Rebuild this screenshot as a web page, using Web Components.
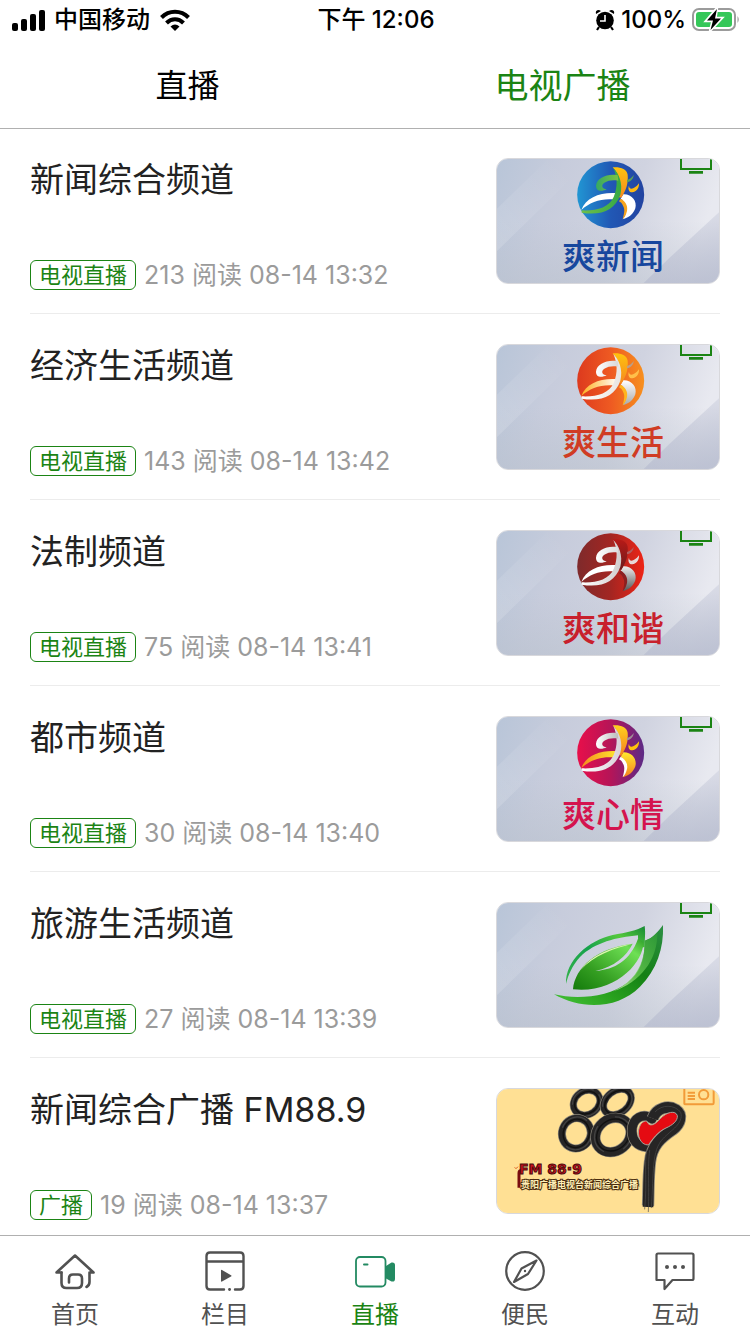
<!DOCTYPE html>
<html lang="zh-CN">
<head>
<meta charset="utf-8">
<meta name="viewport" content="width=device-width, initial-scale=1">
<title>直播</title>
<style>
  html {
    --green: #1b8414;
    --text: #222;
    --muted: #9b9b9b;
    --line: #b0b0b0;
  }
  body {
    margin: 0;
    height: 100vh;
    display: flex;
    flex-direction: column;
    background: #fff;
    color: var(--text);
    font-family: Inter, "Noto Sans CJK SC", sans-serif;
  }
  main {
    flex: 1;
    min-height: 0;
    overflow: hidden;
  }
</style>
</head>
<body>
<status-bar>
  <span slot="carrier">中国移动</span>
  <span slot="time">下午 12:06</span>
  <span slot="battery">100%</span>
</status-bar>
<top-tabs>
  <top-tab>直播</top-tab>
  <top-tab selected>电视广播</top-tab>
</top-tabs>
<main>
  <channel-item tag="电视直播">
    <span slot="title">新闻综合频道</span>
    <span slot="meta">213 阅读 08-14 13:32</span>
    <channel-art slot="art" data-kind="news" data-name="爽新闻"></channel-art>
  </channel-item>
  <channel-item tag="电视直播">
    <span slot="title">经济生活频道</span>
    <span slot="meta">143 阅读 08-14 13:42</span>
    <channel-art slot="art" data-kind="life" data-name="爽生活"></channel-art>
  </channel-item>
  <channel-item tag="电视直播">
    <span slot="title">法制频道</span>
    <span slot="meta">75 阅读 08-14 13:41</span>
    <channel-art slot="art" data-kind="law" data-name="爽和谐"></channel-art>
  </channel-item>
  <channel-item tag="电视直播">
    <span slot="title">都市频道</span>
    <span slot="meta">30 阅读 08-14 13:40</span>
    <channel-art slot="art" data-kind="city" data-name="爽心情"></channel-art>
  </channel-item>
  <channel-item tag="电视直播">
    <span slot="title">旅游生活频道</span>
    <span slot="meta">27 阅读 08-14 13:39</span>
    <channel-art slot="art" data-kind="leaf"></channel-art>
  </channel-item>
  <channel-item tag="广播">
    <span slot="title">新闻综合广播 FM88.9</span>
    <span slot="meta">19 阅读 08-14 13:37</span>
    <channel-art slot="art" data-kind="radio"></channel-art>
  </channel-item>
</main>
<tab-bar>
  <tab-item icon="home">首页</tab-item>
  <tab-item icon="column">栏目</tab-item>
  <tab-item icon="live" selected>直播</tab-item>
  <tab-item icon="compass">便民</tab-item>
  <tab-item icon="chat">互动</tab-item>
</tab-bar>

<script>
const makeTemplate = (html) => {
  const template = document.createElement("template");
  template.innerHTML = html;
  return template;
};

// ---------- status bar ----------
const statusTemplate = makeTemplate(`
<style>
:host {
  display: grid;
  grid-template-columns: 1fr auto 1fr;
  align-items: center;
  height: 40px;
  padding: 0 10px 0 12px;
  color: #000;
  font-size: 24px;
  line-height: 32px;
  font-weight: 500;
}
div {
  display: flex;
  align-items: center;
  gap: 8px;
}
.wifi { margin-left: 2px; }
.right { justify-content: flex-end; gap: 6px; }
svg { display: block; flex: none; }
</style>
<div>
  <svg width="34" height="22" viewBox="0 0 34 22">
    <rect x="0" y="14" width="6" height="8" rx="2"/><rect x="9" y="10" width="6" height="12" rx="2"/>
    <rect x="18" y="5" width="6" height="17" rx="2"/><rect x="27" y="1" width="6" height="21" rx="2"/>
  </svg>
  <slot name="carrier"></slot>
  <svg class="wifi" width="30" height="22" viewBox="0 0 30 22">
    <g fill="none" stroke="#000" stroke-width="4"><path d="M1.500 8.500C9 .8 21 .8 28.500 8.500"/><path d="M6.500 14C11.500 9 18.500 9 23.500 14"/></g>
    <path d="M10.500 17.500Q15 13.500 19.500 17.500L15 22Z"/>
  </svg>
</div>
<slot name="time"></slot>
<div class="right">
  <svg width="20" height="22" viewBox="0 0 20 22">
    <circle cx="10" cy="11.500" r="8.800"/>
    <path d="M1 5Q0 1 4 1L6 2ZM19 5Q20 1 16 1L14 2Z"/>
    <path d="M4 18L2 21M16 18L18 21" stroke="#000" stroke-width="2.200"/>
    <path d="M10 6V12H5" fill="none" stroke="#fff" stroke-width="1.600"/>
  </svg>
  <slot name="battery"></slot>
  <svg width="48" height="24" viewBox="0 0 48 24">
    <rect x="1" y="1" width="42" height="21" rx="6" fill="none" stroke="#9b9b9b" stroke-width="2"/>
    <rect x="4" y="4" width="36" height="15" rx="3" fill="#35c759"/>
    <path d="M45.500 8Q48 11.500 45.500 15Z" fill="#9b9b9b"/>
    <path d="M25 0L14 13H20.500L18 23L30 10H23.500Z" stroke="#fff" stroke-width="2.500"/>
    <path d="M25 1L15 12.500H21L18.500 22L29 10.500H23Z"/>
  </svg>
</div>
`);

class StatusBar extends HTMLElement {
  constructor() {
    super();
    this.attachShadow({ mode: "open" });
    this.shadowRoot.appendChild(statusTemplate.content.cloneNode(true));
  }
}
customElements.define("status-bar", StatusBar);

// ---------- header tabs ----------
const topTabsTemplate = makeTemplate(`
<style>
:host {
  display: block;
  box-shadow: 0 1px 0 var(--line);
  position: relative;
}
nav { display: flex; height: 84px; padding-top: 4px; }
::slotted(*) { flex: 1; }
</style>
<nav><slot></slot></nav>
`);

class TopTabs extends HTMLElement {
  constructor() {
    super();
    this.attachShadow({ mode: "open" });
    this.shadowRoot.appendChild(topTabsTemplate.content.cloneNode(true));
  }
}
customElements.define("top-tabs", TopTabs);

const topTabTemplate = makeTemplate(`
<style>
:host { display: flex; }
button {
  flex: 1;
  border: 0;
  padding: 0;
  background: none;
  color: #000;
  font: inherit;
  font-size: 32px;
  line-height: 40px;
}
:host([selected]) button {
  color: var(--green);
  font-size: 34px;
}
</style>
<button type="button"><slot></slot></button>
`);

class TopTab extends HTMLElement {
  constructor() {
    super();
    this.attachShadow({ mode: "open" });
    this.shadowRoot.appendChild(topTabTemplate.content.cloneNode(true));
  }
}
customElements.define("top-tab", TopTab);

// ---------- one channel row ----------
const channelTemplate = makeTemplate(`
<style>
:host { display: block; padding: 0 30px; }
a {
  display: flex;
  justify-content: space-between;
  align-items: flex-start;
  padding: 30px 0 23px;
  border-bottom: 1px solid #ececec;
  color: inherit;
  text-decoration: none;
}
.info {
  display: flex;
  flex-direction: column;
  gap: 58px;
}
.title { font-size: 34px; line-height: 44px; }
.meta {
  display: flex;
  align-items: center;
  gap: 8px;
  color: var(--muted);
  font-size: 25px;
  line-height: 30px;
}
.tag {
  padding: 0 8px;
  border: 1px solid var(--green);
  border-radius: 6px;
  color: var(--green);
  font-size: 22px;
  line-height: 28px;
}
</style>
<a href="#">
  <div class="info">
    <div class="title"><slot name="title"></slot></div>
    <div class="meta"><span class="tag"></span><slot name="meta"></slot></div>
  </div>
  <slot name="art"></slot>
</a>
`);

class ChannelItem extends HTMLElement {
  constructor() {
    super();
    this.attachShadow({ mode: "open" });
    this.shadowRoot.appendChild(channelTemplate.content.cloneNode(true));
  }
  connectedCallback() {
    this.shadowRoot.querySelector(".tag").textContent = this.getAttribute("tag");
  }
}
customElements.define("channel-item", ChannelItem);

// ---------- thumbnails ----------
// the drawings use a 3x canvas (672 x 378), texts are set in thumbnail pixels
const themes = {
  news: { disc: ["#2196d3", "#2158b5", "#2243a0"], tail: ["#fff", "#fff"], body: ["#6fbf4a", "#35a845"], edge: ["#ffc20e", "#f58a1f"], curl: ["#35a865", "#7cc242"], leg: ["#fff", "#fff"], rim: "#f7a41d", hook: "#fdb813", arm: "#5aa05a", name: "#17479e" },
  life: { disc: ["#dd3a1e", "#ee5a22", "#f7901e"], tail: ["#ffb020", "#fff"], body: ["#fff", "#e8e4e0"], edge: ["#ffc20e", "#f58a1f"], curl: ["#fff", "#d8d8d8"], leg: ["#fff", "#a9a9a9"], rim: "#ffb51e", hook: "#ffc04a", arm: "#b9a08a", name: "#d03c24" },
  law: { disc: ["#7e2a2b", "#a32622", "#ee2416"], tail: ["#fff", "#fff"], body: ["#fff", "#d0cccc"], edge: ["#b81a17", "#6d1c1c"], curl: ["#fff", "#ddd"], leg: ["#eee", "#555"], rim: "#8b2020", hook: "#e8d8d8", arm: "#b06060", name: "#c8202c" },
  city: { disc: ["#e80f4a", "#b51558", "#5c2a86"], tail: ["#f58a1f", "#ffe92e"], body: ["#fff", "#d8d0d8"], edge: ["#ffd21e", "#f5811f"], curl: ["#fff", "#bbb"], leg: ["#ffe92e", "#f5811f"], rim: "#fff", hook: "#ffc20e", arm: "#a09098", name: "#d4144e" },
};

const gradient = (id, colors, vertical) => `
<linearGradient id="${id}" x1="0" y1="0" x2="${vertical ? 0 : 1}" y2="${vertical ? 1 : 0}">
  ${colors.map((c, i) => `<stop offset="${i / (colors.length - 1)}" stop-color="${c}"/>`).join("")}
</linearGradient>`;

const backdrop = `
<defs>
  <linearGradient id="sky" x1="0" y1="0" x2="1" y2=".2">
    <stop offset="0" stop-color="#b8c5d8"/><stop offset=".3" stop-color="#c7ccdc"/>
    <stop offset=".65" stop-color="#d0d3e0"/><stop offset="1" stop-color="#e8e9f0"/>
  </linearGradient>
  <linearGradient id="band" x1="0" y1="1" x2="1" y2="0">
    <stop offset="0" stop-color="#fff" stop-opacity=".16"/><stop offset=".8" stop-color="#fff" stop-opacity="0"/>
  </linearGradient>
  <linearGradient id="low" x1="0" y1="0" x2="0" y2="1">
    <stop offset=".5" stop-color="#b4bdc9" stop-opacity="0"/><stop offset="1" stop-color="#b4bdc9" stop-opacity=".45"/>
  </linearGradient>
  <linearGradient id="shade" x1=".3" y1="0" x2=".6" y2="1">
    <stop offset="0" stop-color="#b3b8cd" stop-opacity=".2"/><stop offset="1" stop-color="#b3b8cd" stop-opacity=".65"/>
  </linearGradient>
</defs>
<rect width="672" height="378" fill="url(#sky)"/>
<rect width="672" height="378" fill="url(#low)"/>
<path d="M0 155L160 0H290L0 282Z" fill="url(#band)"/>
<path d="M672 160L520 300L440 378H672Z" fill="url(#shade)"/>`;

const tvBadge = `<path d="M555 0V33H645V0" fill="none" stroke="#1b8414" stroke-width="6"/><path d="M579 43H621" stroke="#1b8414" stroke-width="8"/>`;

const dancer = (t) => `
<defs>
  ${gradient("disc", t.disc)}${gradient("tail", t.tail)}${gradient("body", t.body)}
  ${gradient("edge", t.edge, true)}${gradient("curl", t.curl)}${gradient("leg", t.leg, true)}
</defs>
<g transform="translate(-48 -54)">
  <circle cx="392" cy="164" r="100.500" fill="url(#disc)"/>
  <path d="M304 210C318 171 365 155 414 160L404 179C367 174 330 186 304 210Z" fill="url(#tail)"/>
  <path d="M430 163C456 162 472 184 466 205C460 222 448 233 428 238C438 224 442 208 436 194C432 184 428 179 422 176Z" fill="url(#leg)"/>
  <path d="M422 176C434 182 445 196 441 213C438 225 434 232 428 238C432 222 436 208 429 197C426 190 422 186 417 184Z" fill="${t.rim}"/>
  <path d="M398 82C420 80 440 86 443 104C445 128 440 148 424 173L414 171C426 135 420 106 398 82Z" fill="url(#edge)"/>
  <path d="M400 84C416 100 430 130 421 164C405 210 364 228 305 218V211C350 213 386 203 401 171C414 140 412 110 400 84Z" fill="url(#body)"/>
  <path d="M413 106C384 100 350 113 348 137C348 154 364 156 380 148C366 146 362 135 373 128C384 121 399 119 415 122Z" fill="url(#curl)"/>
  <path d="M447 137C447 150 462 150 477 130C478 147 466 158 456 157C446 156 443 146 447 137Z" fill="${t.hook}"/>
  <path d="M441 120C449 118 456 112 461 105C461 116 452 125 441 127Z" fill="${t.arm}"/>
</g>`;

const leaf = `
<defs>
  <linearGradient id="rim" x1="0" y1="1" x2="1" y2="0"><stop offset="0" stop-color="#35b34a"/><stop offset=".45" stop-color="#16a24c"/><stop offset=".75" stop-color="#54c83c"/><stop offset="1" stop-color="#168a36"/></linearGradient>
  <linearGradient id="core" x1="0" y1="1" x2="1" y2="0"><stop offset="0" stop-color="#137a0b"/><stop offset=".35" stop-color="#359f22"/><stop offset=".8" stop-color="#6ee054"/><stop offset="1" stop-color="#2f9e2a"/></linearGradient>
  <linearGradient id="blade" x1="0" y1="1" x2="1" y2="0"><stop offset="0" stop-color="#45c238"/><stop offset=".3" stop-color="#2aa31f"/><stop offset=".6" stop-color="#148014"/><stop offset="1" stop-color="#2d8f45"/></linearGradient>
  <linearGradient id="shine" x1="0" y1="1" x2="1" y2="0"><stop offset="0" stop-color="#e6f7c8"/><stop offset=".4" stop-color="#6fce58"/><stop offset="1" stop-color="#2f9c35"/></linearGradient>
</defs>
<g transform="translate(-48 -36)">
  <path d="M222 313C290 329 385 322 442 278C480 248 495 210 494 152C518 145 534 125 549 105C552 175 530 240 480 290C412 358 305 360 222 313Z" fill="url(#blade)"/>
  <path d="M400 304C462 275 495 225 494 152C512 148 520 139 532 127C534 210 480 278 400 304Z" fill="url(#shine)" opacity=".75"/>
  <path d="M258 282C256 210 325 152 398 135C440 127 470 122 494 108C497 130 494 146 494 171L479 174C474 160 474 148 474 136C410 142 345 157 300 201C276 228 265 254 258 282Z" fill="url(#rim)"/>
  <path d="M279 298C285 232 350 174 458 161C440 198 402 231 346 243C405 238 450 212 474 146L490 156C492 218 405 312 279 298Z" fill="url(#core)"/>
  <path d="M301 241C334 195 390 172 458 161C400 176 342 195 301 241Z" fill="#dff5b0"/>
</g>`;

// brush rings: a broad dark stroke with two faint bristle lines over it
const ring = (cx, cy, rx, ry, turn, w) => `
<g transform="rotate(${turn} ${cx} ${cy})" fill="none">
  <ellipse cx="${cx}" cy="${cy}" rx="${rx}" ry="${ry}" stroke="#8d887c" stroke-width="${w + 4}"/>
  <ellipse cx="${cx}" cy="${cy}" rx="${rx}" ry="${ry}" stroke="#262525" stroke-width="${w}"/>
  <ellipse cx="${cx}" cy="${cy}" rx="${rx + 2}" ry="${ry + 4}" stroke="#4a4a4a" stroke-width="4" stroke-dasharray="90 60" opacity=".8"/>
  <ellipse cx="${cx}" cy="${cy}" rx="${rx - 4}" ry="${ry - 3}" stroke="#111" stroke-width="4"/>
</g>`;

const radio = `
<rect width="672" height="378" fill="#ffe094"/>
<g transform="translate(-48 -39)">
  ${ring(320, 83, 42, 35, -35, 18)}
  ${ring(412, 81, 46, 33, -38, 18)}
  ${ring(289, 175, 43, 46, 20, 20)}
  ${ring(399, 180, 56, 48, -40, 27)}
  <g fill="none" stroke-linecap="round">
    <path d="M516 132C490 112 456 128 456 168C456 196 472 214 500 216" stroke="#8d887c" stroke-width="31"/>
    <path d="M516 132C490 112 456 128 456 168C456 196 472 214 500 216" stroke="#262525" stroke-width="27"/>
    <path d="M518 130C530 98 565 90 587 104C610 120 600 148 578 164C540 190 516 212 510 260C504 310 506 355 504 392" stroke="#8d887c" stroke-width="37" stroke-linecap="butt"/>
    <path d="M518 130C530 98 565 90 587 104C610 120 600 148 578 164C540 190 516 212 510 260C504 310 506 355 504 396" stroke="#262525" stroke-width="32" stroke-linecap="butt"/>
    <path d="M526 110C545 88 584 88 602 112C612 146 572 166 550 190C514 226 522 290 514 398M500 226C492 270 502 320 494 402M509 226C502 280 508 320 505 410" stroke="#4c4c4c" stroke-width="2"/>
  </g>
  <path d="M500 138C508 158 524 150 540 132C560 110 587 105 592 122C594 138 576 151 558 159C532 171 520 190 505 210C480 210 470 180 478 157C482 145 490 138 500 138Z" fill="#e50b12" stroke="#a9a39a" stroke-width="3"/>
  <path d="M117 338V294Q117 286 128 286" fill="none" stroke="#7a0c10" stroke-width="9"/>
  <path d="M104 277L108 281M114 275L108 281" stroke="#d8581e" stroke-width="3"/>
  <path d="M613 39V86Q613 88 617 88H697Q701 88 701 84V39M623 53H645M623 63H645M623 72H645" fill="none" stroke="#f29b38" stroke-width="6"/>
  <circle cx="671" cy="59" r="14" fill="none" stroke="#f29b38" stroke-width="6"/>
</g>`;

const artTemplate = makeTemplate(`
<style>
:host {
  display: block;
  box-sizing: border-box;
  flex: none;
  width: 224px;
  height: 126px;
  border: 1px solid #d8d8dc;
  border-radius: 12px;
  overflow: hidden;
}
svg { display: block; width: 100%; height: 100%; }
text { font-family: "Noto Sans CJK SC", sans-serif; font-weight: 700; }
.name { font-size: 34px; font-weight: 500; text-anchor: middle; }
.fm { font-family: "DejaVu Sans", sans-serif; font-size: 14px; fill: #c8101c; stroke: #4a0a0c; stroke-width: 1px; }
.sub { font-size: 9px; fill: #fff0b8; stroke: #4a2c10; stroke-width: 2px; paint-order: stroke; }
</style>
<svg viewBox="1 1 222 124" preserveAspectRatio="xMidYMid slice"></svg>
`);

class ChannelArt extends HTMLElement {
  constructor() {
    super();
    this.attachShadow({ mode: "open" });
    this.shadowRoot.appendChild(artTemplate.content.cloneNode(true));
    this.svg = this.shadowRoot.querySelector("svg");
  }
  connectedCallback() {
    this.render();
  }
  render() {
    const { kind, name } = this.dataset;
    const theme = themes[kind];
    let art = "";
    let words = "";
    if (kind === "radio") {
      art = radio;
      words = `<text class="fm" x="23" y="86">FM 88·9</text><text class="sub" x="25" y="100">贵阳广播电视台新闻综合广播</text>`;
    } else if (kind === "leaf") {
      art = backdrop + leaf + tvBadge;
    } else {
      art = backdrop + dancer(theme) + tvBadge;
      words = `<text class="name" x="117" y="111" fill="${theme.name}">${name}</text>`;
    }
    this.svg.innerHTML = `<g transform="scale(.33333)">${art}</g>${words}`;
  }
}
customElements.define("channel-art", ChannelArt);

// ---------- bottom bar ----------
const icons = {
  home: `<g fill="none" stroke="currentColor" stroke-width="2.600" stroke-linecap="round" stroke-linejoin="round"><path d="M6.500 21.500H1.500L20 4.500L38.500 21.500H34.500V31Q34.500 34.500 31.500 36"/><path d="M6.500 21.500V32Q6.500 37 11.500 37H22Q27 37 27 32V27.500Q27 23.500 23 23.500H18Q14 23.500 14 27.500V31.500"/></g>`,
  column: `<g fill="none" stroke="currentColor" stroke-width="2.400" stroke-linecap="round"><path d="M19 38.500H5Q1.500 38.500 1.500 35V5Q1.500 1.500 5 1.500H35Q38.500 1.500 38.500 5V35Q38.500 38.500 35 38.500H30M2 10.500H38"/><path d="M24.500 38.500H24.600" stroke-width="2.800"/></g><path d="M16 19.500V30Q16 31 17 30.500L26 25.500Q27 25 26 24.300L17 19Q16 18.500 16 19.500Z" fill="currentColor"/>`,
  live: `<rect x="1" y="6" width="29.500" height="29.500" rx="4" fill="none" stroke="#238a62" stroke-width="1.800"/><path d="M9 13.500H12.500" stroke="#238a62" stroke-width="2" stroke-linecap="round"/><path d="M31 15L36.500 11.500Q40 11 40 14V28Q40 31 36.500 30.500L31 27.500Z" fill="#238a62"/>`,
  compass: `<g fill="none" stroke="currentColor" stroke-width="2.200" stroke-linejoin="round"><circle cx="20" cy="20" r="18.800"/><path d="M31.500 9.500L16.500 17.500L9 31L23 23Z"/></g><circle cx="20" cy="20" r="1.200" fill="currentColor"/>`,
  chat: `<path d="M1.500 29V4Q1.500 2.500 3 2.500H37Q38.500 2.500 38.500 4V27.500Q38.500 29 37 29H17.500L9.500 38V29Z" fill="none" stroke="currentColor" stroke-width="2.200" stroke-linejoin="round"/><g fill="currentColor"><circle cx="12" cy="16" r="2"/><circle cx="20" cy="16" r="2"/><circle cx="28" cy="16" r="2"/></g>`,
};

const tabBarTemplate = makeTemplate(`
<style>
:host { display: block; border-top: 1px solid var(--line); background: #fff; }
nav { display: flex; height: 98px; }
::slotted(*) { flex: 1; }
</style>
<nav><slot></slot></nav>
`);

class TabBar extends HTMLElement {
  constructor() {
    super();
    this.attachShadow({ mode: "open" });
    this.shadowRoot.appendChild(tabBarTemplate.content.cloneNode(true));
  }
}
customElements.define("tab-bar", TabBar);

const tabItemTemplate = makeTemplate(`
<style>
:host { display: block; color: #515151; }
:host([selected]) { color: var(--green); }
a {
  display: flex;
  flex-direction: column;
  align-items: center;
  gap: 8px;
  padding-top: 15px;
  color: inherit;
  text-decoration: none;
  font-size: 24px;
  line-height: 32px;
}
svg { display: block; }
</style>
<a href="#">
  <svg width="40" height="40" viewBox="0 0 40 40"></svg>
  <slot></slot>
</a>
`);

class TabItem extends HTMLElement {
  constructor() {
    super();
    this.attachShadow({ mode: "open" });
    this.shadowRoot.appendChild(tabItemTemplate.content.cloneNode(true));
  }
  connectedCallback() {
    this.shadowRoot.querySelector("svg").innerHTML = icons[this.getAttribute("icon")];
  }
}
customElements.define("tab-item", TabItem);
</script>
</body>
</html>
